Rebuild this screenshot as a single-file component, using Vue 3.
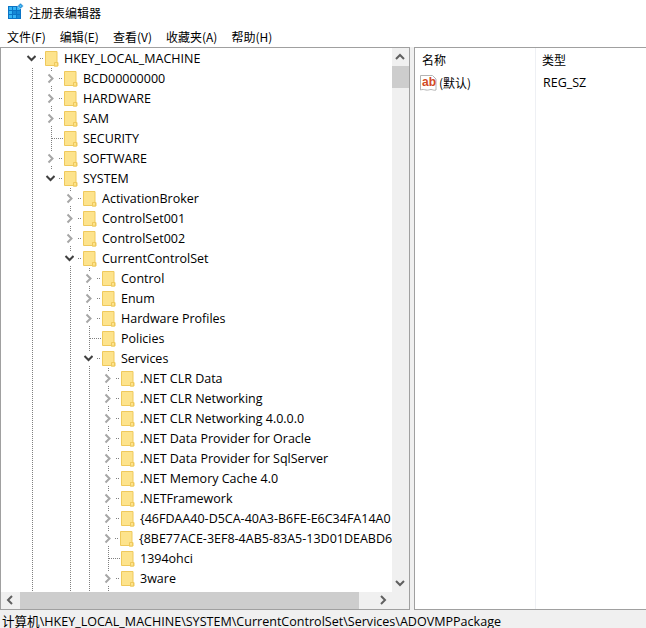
<script setup>
const names = [
  ['HKEY_LOCAL_MACHINE', 0, 'open'],
  ['BCD00000000', 1, 'closed'],
  ['HARDWARE', 1, 'closed'],
  ['SAM', 1, 'closed'],
  ['SECURITY', 1, 'leaf'],
  ['SOFTWARE', 1, 'closed'],
  ['SYSTEM', 1, 'open'],
  ['ActivationBroker', 2, 'closed'],
  ['ControlSet001', 2, 'closed'],
  ['ControlSet002', 2, 'closed'],
  ['CurrentControlSet', 2, 'open'],
  ['Control', 3, 'closed'],
  ['Enum', 3, 'closed'],
  ['Hardware Profiles', 3, 'closed'],
  ['Policies', 3, 'leaf'],
  ['Services', 3, 'open'],
  ['.NET CLR Data', 4, 'closed'],
  ['.NET CLR Networking', 4, 'closed'],
  ['.NET CLR Networking 4.0.0.0', 4, 'closed'],
  ['.NET Data Provider for Oracle', 4, 'closed'],
  ['.NET Data Provider for SqlServer', 4, 'closed'],
  ['.NET Memory Cache 4.0', 4, 'closed'],
  ['.NETFramework', 4, 'closed'],
  ['{46FDAA40-D5CA-40A3-B6FE-E6C34FA14A0', 4, 'closed'],
  ['{8BE77ACE-3EF8-4AB5-83A5-13D01DEABD6', 4, 'closed'],
  ['1394ohci', 4, 'leaf'],
  ['3ware', 4, 'closed'],
]
const rows = names.map(([name, level, state]) => ({ name, level, state }))
const menus = ['文件(F)', '编辑(E)', '查看(V)', '收藏夹(A)', '帮助(H)']
const guides = [
  { x: 32.5, y1: 68, y2: 592 },
  { x: 51.5, y1: 68, y2: 170 },
  { x: 70.5, y1: 188, y2: 592 },
  { x: 89.5, y1: 268, y2: 592 },
  { x: 108.5, y1: 368, y2: 592 },
]
const cells = []
for (const y of [4, 8, 12]) for (const x of [1, 5, 9]) cells.push({ x, y, dark: (x === 5 && y === 8) || (x === 9 && y !== 4) })
</script>

<template>
  <div class="window">
    <header class="title">
      <svg class="app-icon" width="16" height="18" viewBox="0 0 16 18">
        <rect x="0" y="3" width="13" height="13" fill="#0a74c6" />
        <rect v-for="c in cells" :key="c.x + '-' + c.y" :x="c.x" :y="c.y" width="3" height="3" :fill="c.dark ? '#1688d6' : '#35b4f4'" />
        <path d="M12.500 0l3 3-3 3-3-3z" fill="#0f7fd0" stroke="#fff" stroke-width=".6" />
        <path d="M12.500 1.500l1.500 1.500-1.500 1.500-1.500-1.500z" fill="#4cc0f6" />
      </svg>
      <span>注册表编辑器</span>
    </header>
    <nav class="menu">
      <span v-for="m in menus" :key="m">{{ m }}</span>
    </nav>
    <main class="panes">
      <section class="tree-pane">
        <div class="tree-body">
          <div class="tree-view">
            <svg class="guides" width="392" height="544">
              <line v-for="g in guides" :key="g.x" :x1="g.x" :x2="g.x" :y1="g.y1 - 48" :y2="g.y2 - 48" />
            </svg>
            <div v-for="r in rows" :key="r.name" class="row" :class="'lv' + r.level">
              <span class="twist" :class="r.state">
                <svg v-if="r.state !== 'leaf'" width="12" height="14" viewBox="0 0 12 14">
                  <path v-if="r.state === 'open'" d="M3.500 5l4 4 4-4" />
                  <path v-else d="M5.500 3.500l4 4-4 4" />
                </svg>
              </span>
              <span class="dots" :class="r.state"></span>
              <svg class="folder" width="14" height="16" viewBox="0 0 14 16">
                <path d="M.5.5h11.500v11h1v3.500h-4v-.5h-8.500z" fill="#fde38c" stroke="#efc95c" />
                <path d="M9.500 11.500h3v3.500h-3z" fill="#fde38c" stroke="#efc95c" />
              </svg>
              <span class="label">{{ r.name }}</span>
            </div>
          </div>
          <div class="vscroll">
            <svg width="16" height="18" viewBox="0 0 16 18"><path class="sb" d="M4 11l4-4 4 4" /></svg>
            <div class="vthumb"></div>
            <div class="grow"></div>
            <svg width="16" height="18" viewBox="0 0 16 18"><path class="sb" d="M4 7l4 4 4-4" /></svg>
          </div>
        </div>
        <div class="hscroll">
          <svg width="19" height="16" viewBox="0 0 19 16"><path class="sb dark" d="M11 4l-4 4 4 4" /></svg>
          <div class="hthumb"></div>
          <svg class="end" width="16" height="16" viewBox="0 0 16 16"><path class="sb" d="M6 4l4 4-4 4" /></svg>
        </div>
      </section>
      <section class="list-pane">
        <div class="list-row head">
          <span class="c1">名称</span><span class="c2">类型</span>
        </div>
        <div class="list-row">
          <span class="c1 val">
            <svg class="ab" width="17" height="18" viewBox="0 0 17 18">
              <path d="M.5 1.500h12l3.500 3.500v11c-2 .8-3.500-.5-5-.5s-3 1-5 .5-3.500-.8-5.500 0z" fill="#fff" stroke="#b4b4b4" />
              <text x="2" y="12" class="abt">ab</text>
            </svg>
            <span>(默认)</span>
          </span>
          <span class="c2 type">REG_SZ</span>
        </div>
        <div class="column-rule"></div>
      </section>
    </main>
    <footer class="status">计算机\HKEY_LOCAL_MACHINE\SYSTEM\CurrentControlSet\Services\ADOVMPPackage</footer>
  </div>
</template>

<style>
html, body { margin: 0; background: #fff; }
</style>

<style scoped>
.window {
  width: 646px;
  height: 628px;
  overflow: hidden;
  display: flex;
  flex-direction: column;
  background: #fff;
  color: #000;
  font-family: "Open Sans", "Noto Sans CJK SC", sans-serif;
  font-size: 12px;
}
.title {
  height: 24px;
  display: flex;
  align-items: center;
  padding-left: 8px;
  gap: 5px;
  font-family: "Noto Sans CJK SC", sans-serif;
  font-size: 12px;
  color: #000;
}
.menu {
  height: 23px;
  box-sizing: border-box;
  padding: 2px 0 0 7px;
  display: flex;
  align-items: center;
  gap: 14px;
  font-family: "Noto Sans CJK SC", sans-serif;
  font-size: 12px;
  color: #000;
}
.panes {
  flex: 1;
  min-height: 0;
  display: flex;
  gap: 4px;
  background: #f0f0f0;
}
.tree-pane {
  width: 410px;
  box-sizing: border-box;
  border: 1px solid #a0a0a0;
  display: flex;
  flex-direction: column;
  background: #fff;
}
.tree-body { flex: 1; min-height: 0; display: flex; }
.tree-view { position: relative; flex: 1; overflow: hidden; }
.guides { position: absolute; left: -1px; top: 0; }
.guides line { stroke: #808080; stroke-dasharray: 1 1; shape-rendering: crispEdges; }
.row {
  position: relative;
  height: 20px;
  display: flex;
  align-items: center;
  white-space: nowrap;
  font-size: 12.5px;
}
.lv0 { padding-left: 23px; }
.lv1 { padding-left: 42px; }
.lv2 { padding-left: 61px; }
.lv3 { padding-left: 80px; }
.lv4 { padding-left: 99px; }
.twist { width: 13px; height: 14px; display: flex; align-items: center; background: #fff; }
.twist.leaf { background: none; }
.twist path { fill: none; stroke-width: 2; }
.twist.closed path { stroke: #a6a6a6; }
.twist.open path { stroke: #404040; }
.dots { height: 1px; flex: none; }
.dots.closed, .dots.open { background: repeating-linear-gradient(90deg, #808080 0 1px, transparent 1px 2px); width: 4px; margin: 0 1px 0 3px; }
.dots.leaf { background: repeating-linear-gradient(90deg, #808080 0 1px, transparent 1px 2px); width: 12px; margin-left: -4px; }
.folder { flex: none; margin: 2px 5px 0 0; }
.label { color: #000; }
.vscroll { width: 17px; display: flex; flex-direction: column; background: #f0f0f0; }
.vthumb { height: 22px; background: #cdcdcd; }
.grow { flex: 1; }
.sb { fill: none; stroke: #606060; stroke-width: 2; }
.hscroll { height: 17px; display: flex; background: #f0f0f0; }
.hthumb { width: 339px; background: #cdcdcd; }
.end { margin-left: 16px; }
.list-pane {
  position: relative;
  flex: 1;
  box-sizing: border-box;
  border: 1px solid #a0a0a0;
  border-right: 0;
  background: #fff;
}
.list-row { height: 23px; display: flex; align-items: center; }
.head { font-family: "Noto Sans CJK SC", sans-serif; }
.head .c2 { padding-left: 7px; }
.c1 { width: 120px; padding-left: 7px; box-sizing: border-box; display: flex; align-items: center; }
.val { padding-left: 5px; gap: 2px; font-family: "Noto Sans CJK SC", sans-serif; }
.c2 { padding-left: 8px; }
.type { font-size: 12.5px; }
.abt { font: bold 12px "Liberation Sans", sans-serif; fill: #d24a26; }
.column-rule { position: absolute; left: 120px; top: 0; bottom: 0; width: 1px; background: #eef0f4; }
.status {
  height: 18px;
  padding-left: 2px;
  background: #f0f0f0;
  white-space: nowrap;
  overflow: hidden;
  line-height: 24px;
  font-size: 12.55px;
}
</style>
